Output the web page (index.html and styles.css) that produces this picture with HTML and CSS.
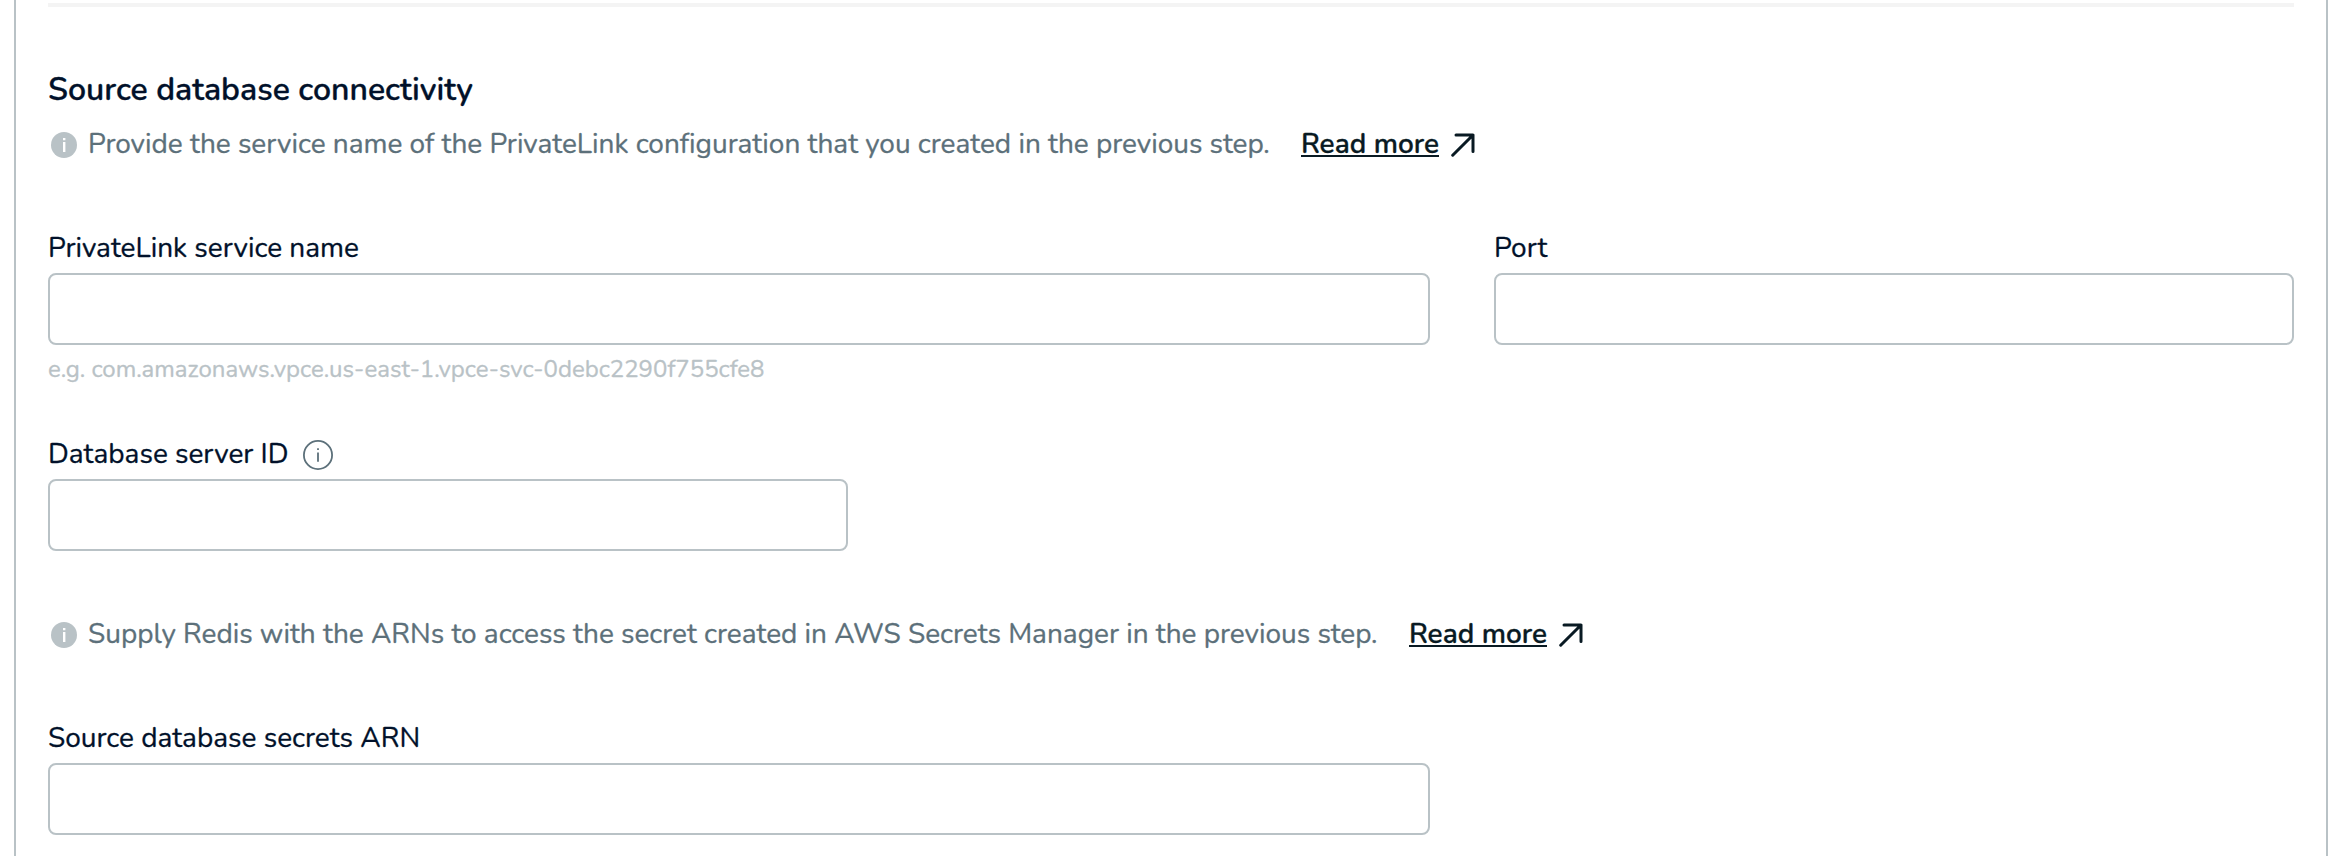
FILE: index.html
```html
<!DOCTYPE html>
<html lang="en">
<head>
<meta charset="utf-8">
<title>Source database connectivity</title>
<link rel="stylesheet" href="styles.css">
</head>
<body>
<main class="panel">
  <hr class="rule">
  <h2 class="heading">Source database connectivity</h2>
  <div class="note">
    <svg class="note-icon" viewBox="0 0 26 26"><circle cx="13" cy="13" r="13"/><path d="M12 6h2.4v2.2H12zM12 10h2.4v10H12z" fill="#fff"/></svg>
    <span class="note-text note-link">Provide the service name of the PrivateLink configuration that you created in the previous step.</span>
    <a class="more" href="#">Read more</a>
    <svg class="arrow" viewBox="0 0 24 24"><path d="M5 2H22V18.5M22 2L1.7 22.2"/></svg>
  </div>
  <div class="row">
    <div class="field wide">
      <label class="label" for="service"><span>PrivateLink service name</span></label>
      <input class="input" id="service" type="text">
      <div class="hint">e.g. com.amazonaws.vpce.us-east-1.vpce-svc-0debc2290f755cfe8</div>
    </div>
    <div class="field">
      <label class="label" for="port"><span>Port</span></label>
      <input class="input" id="port" type="text">
    </div>
  </div>
  <div class="field short">
    <label class="label" for="server"><span class="l-server">Database server ID</span>
      <svg class="info" viewBox="0 0 30 30"><circle cx="15" cy="15" r="14.1"/><path d="M15 8.2v1.8M15 12.4v9.4"/></svg>
    </label>
    <input class="input" id="server" type="text">
  </div>
  <div class="note second">
    <svg class="note-icon" viewBox="0 0 26 26"><circle cx="13" cy="13" r="13"/><path d="M12 6h2.4v2.2H12zM12 10h2.4v10H12z" fill="#fff"/></svg>
    <span class="note-text note-secret">Supply Redis with the ARNs to access the secret created in AWS Secrets Manager in the previous step.</span>
    <a class="more" href="#">Read more</a>
    <svg class="arrow" viewBox="0 0 24 24"><path d="M5 2H22V18.5M22 2L1.7 22.2"/></svg>
  </div>
  <div class="field wide">
    <label class="label" for="arn"><span>Source database secrets ARN</span></label>
    <input class="input" id="arn" type="text">
  </div>
</main>
</body>
</html>
```
FILE: styles.css
```css
* { box-sizing: border-box; }
body {
  margin: 0;
  background: #fff;
  font-family: Nunito, Lato, "Open Sans", sans-serif;
  font-size: 28px;
  line-height: 40px;
  color: #01112a;
  -webkit-text-stroke: 0.3px currentColor;
  overflow: hidden;
}
.panel {
  height: 856px;
  margin: 0 18px 0 14px;
  padding: 3px 32px 0;
  border: solid #b9c2c6;
  border-width: 0 2px;
}
.rule { height: 4px; margin: 0 0 59px; border: 0; background: #f4f4f4; }
.heading { height: 44px; margin: 0 0 12px; font-size: 32px; line-height: 48px; font-weight: 600; }
.note { display: flex; align-items: center; height: 40px; margin-bottom: 64px; color: #5c707a; white-space: nowrap; }
.note-icon { flex: none; width: 26px; height: 26px; margin: 6px 11px 0 3px; fill: #b9c2c6; }
.note-text { flex: none; margin-right: 32px; padding-top: 4px; letter-spacing: -0.01px; }
.note-link { width: 1181px; }
.note-secret { width: 1289px; }
.more {
  width: 138px;
  height: 35px;
  line-height: 44px;
  margin-bottom: 5px;
  border-bottom: 2px solid #091a23;
  color: #091a23;
  font-weight: 600;
  text-decoration: none;
}
.arrow { width: 24px; height: 24px; margin: 5px 0 0 12px; fill: none; stroke: #091a23; stroke-width: 3; stroke-linecap: round; stroke-linejoin: round; }
.row { display: grid; grid-template-columns: 1382px 800px; gap: 64px; height: 159px; margin-bottom: 47px; }
.wide { width: 1382px; }
.short { width: 800px; }
.label { display: flex; align-items: center; height: 40px; margin-bottom: 7px; white-space: nowrap; }
.label span { padding-top: 4px; }
.l-server { width: 239px; }
.info { width: 30px; height: 30px; margin: 6px 0 0 16px; fill: none; stroke: #5c707a; stroke-width: 1.8; }
.input { display: block; width: 100%; height: 72px; padding: 0 16px; border: 2px solid #b9c2c6; border-radius: 8px; background: #fff; font: inherit; }
.hint { margin-top: 7px; font-size: 24px; line-height: 34px; color: #b9c2c6; white-space: nowrap; }
.second { margin-top: 61px; }
```
